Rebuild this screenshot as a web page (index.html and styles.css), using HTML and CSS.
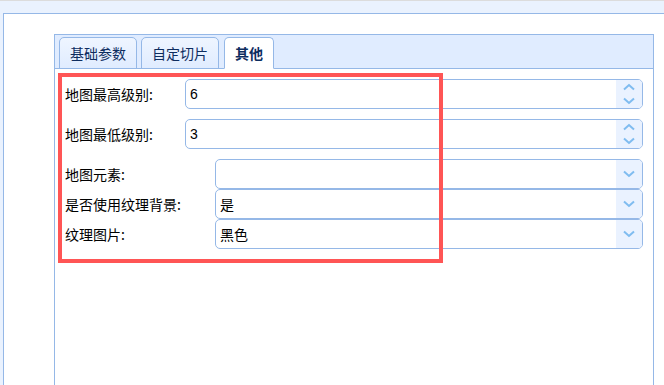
FILE: index.html
```html
<!DOCTYPE html>
<html lang="zh-CN">
<head>
<meta charset="utf-8">
<title>地图设置</title>
<link rel="stylesheet" href="styles.css">
</head>
<body>
<div class="page">
  <div class="outer">
    <div class="tabs">
      <div class="tabs-header">
        <div class="tab">基础参数</div>
        <div class="tab">自定切片</div>
        <div class="tab active">其他</div>
      </div>
      <div class="tabs-body">
        <div class="grid g1">
          <div class="label">地图最高级别:</div>
          <div class="field">
            <span class="value">6</span>
            <span class="btns spin">
              <svg width="12" height="8" viewBox="0 0 12 8"><path d="M1 6.5 L6 2 L11 6.5" fill="none" stroke="#7fbcf0" stroke-width="2"/></svg>
              <svg width="12" height="8" viewBox="0 0 12 8"><path d="M1 1.5 L6 6 L11 1.5" fill="none" stroke="#7fbcf0" stroke-width="2"/></svg>
            </span>
          </div>
          <div class="label">地图最低级别:</div>
          <div class="field">
            <span class="value">3</span>
            <span class="btns spin">
              <svg width="12" height="8" viewBox="0 0 12 8"><path d="M1 6.5 L6 2 L11 6.5" fill="none" stroke="#7fbcf0" stroke-width="2"/></svg>
              <svg width="12" height="8" viewBox="0 0 12 8"><path d="M1 1.5 L6 6 L11 1.5" fill="none" stroke="#7fbcf0" stroke-width="2"/></svg>
            </span>
          </div>
        </div>
        <div class="grid g2">
          <div class="label">地图元素:</div>
          <div class="field">
            <span class="value"></span>
            <span class="btns">
              <svg width="12" height="8" viewBox="0 0 12 8"><path d="M1 1.5 L6 6 L11 1.5" fill="none" stroke="#7fbcf0" stroke-width="2"/></svg>
            </span>
          </div>
          <div class="label">是否使用纹理背景:</div>
          <div class="field">
            <span class="value">是</span>
            <span class="btns">
              <svg width="12" height="8" viewBox="0 0 12 8"><path d="M1 1.5 L6 6 L11 1.5" fill="none" stroke="#7fbcf0" stroke-width="2"/></svg>
            </span>
          </div>
          <div class="label">纹理图片:</div>
          <div class="field">
            <span class="value">黑色</span>
            <span class="btns">
              <svg width="12" height="8" viewBox="0 0 12 8"><path d="M1 1.5 L6 6 L11 1.5" fill="none" stroke="#7fbcf0" stroke-width="2"/></svg>
            </span>
          </div>
        </div>
        <div class="highlight"></div>
      </div>
    </div>
  </div>
</div>
</body>
</html>
```
FILE: styles.css
```css
html, body {
  margin: 0;
  padding: 0;
  height: 100%;
  overflow: hidden;
}
body {
  background: #eaf2fe;
  font-family: "Liberation Sans", "Noto Sans CJK SC", sans-serif;
  font-size: 13px;
  color: #000;
}
.page {
  border-top: 1px solid #dcdcdc;
  padding: 12px 0 0 3px;
  height: 100%;
  box-sizing: border-box;
  display: flex;
}
.outer {
  flex: 1;
  display: flex;
  background: #fff;
  border-top: 1px solid #95b8e7;
  border-left: 1px solid #95b8e7;
  padding: 20px 0 0 50px;
}
.tabs {
  width: 600px;
  display: flex;
  flex-direction: column;
}
.tabs-header {
  display: flex;
  align-items: flex-end;
  gap: 4px;
  height: 33px;
  background: #e0ecff;
  border: 1px solid #95b8e7;
  padding-left: 4px;
}
.tab {
  height: 32px;
  box-sizing: border-box;
  margin-bottom: -1px;
  padding: 0 10px;
  display: flex;
  align-items: center;
  border: 1px solid #95b8e7;
  border-radius: 5px 5px 0 0;
  background: linear-gradient(to bottom, #eff5ff 0%, #e0ecff 100%);
  color: #0e2d5f;
  font-family: "Noto Sans CJK SC", sans-serif;
  font-size: 14px;
}
.tab.active {
  background: #fff;
  border-bottom-color: #fff;
  font-weight: bold;
  margin-left: 1px;
}
.tabs-body {
  position: relative;
  flex: 1;
  border-left: 1px solid #95b8e7;
  border-right: 1px solid #95b8e7;
  padding: 10px 10px 0 10px;
  display: flex;
  flex-direction: column;
  gap: 10px;
}
.grid {
  display: grid;
  grid-auto-rows: 30px;
}
.g1 {
  grid-template-columns: 120px 1fr;
  row-gap: 10px;
}
.g2 {
  grid-template-columns: 150px 1fr;
}
.label {
  display: flex;
  align-items: center;
  font-family: "Noto Sans CJK SC", sans-serif;
  font-size: 14px;
  color: #000;
}
.field {
  display: flex;
  border: 1px solid #95b8e7;
  border-radius: 5px;
  box-sizing: border-box;
  height: 30px;
  overflow: hidden;
}
.value {
  flex: 1;
  display: flex;
  align-items: center;
  padding-left: 4px;
  font-size: 14px;
  font-family: "Liberation Sans", "Noto Sans CJK SC", sans-serif;
}
.btns {
  width: 26px;
  background: #eaf2ff;
  display: flex;
  flex-direction: column;
  align-items: center;
  justify-content: center;
}
.btns.spin {
  gap: 6px;
}
.highlight {
  position: absolute;
  left: 3px;
  top: 4px;
  width: 385px;
  height: 190px;
  box-sizing: border-box;
  border: 4px solid #ff5555;
  pointer-events: none;
}
```
